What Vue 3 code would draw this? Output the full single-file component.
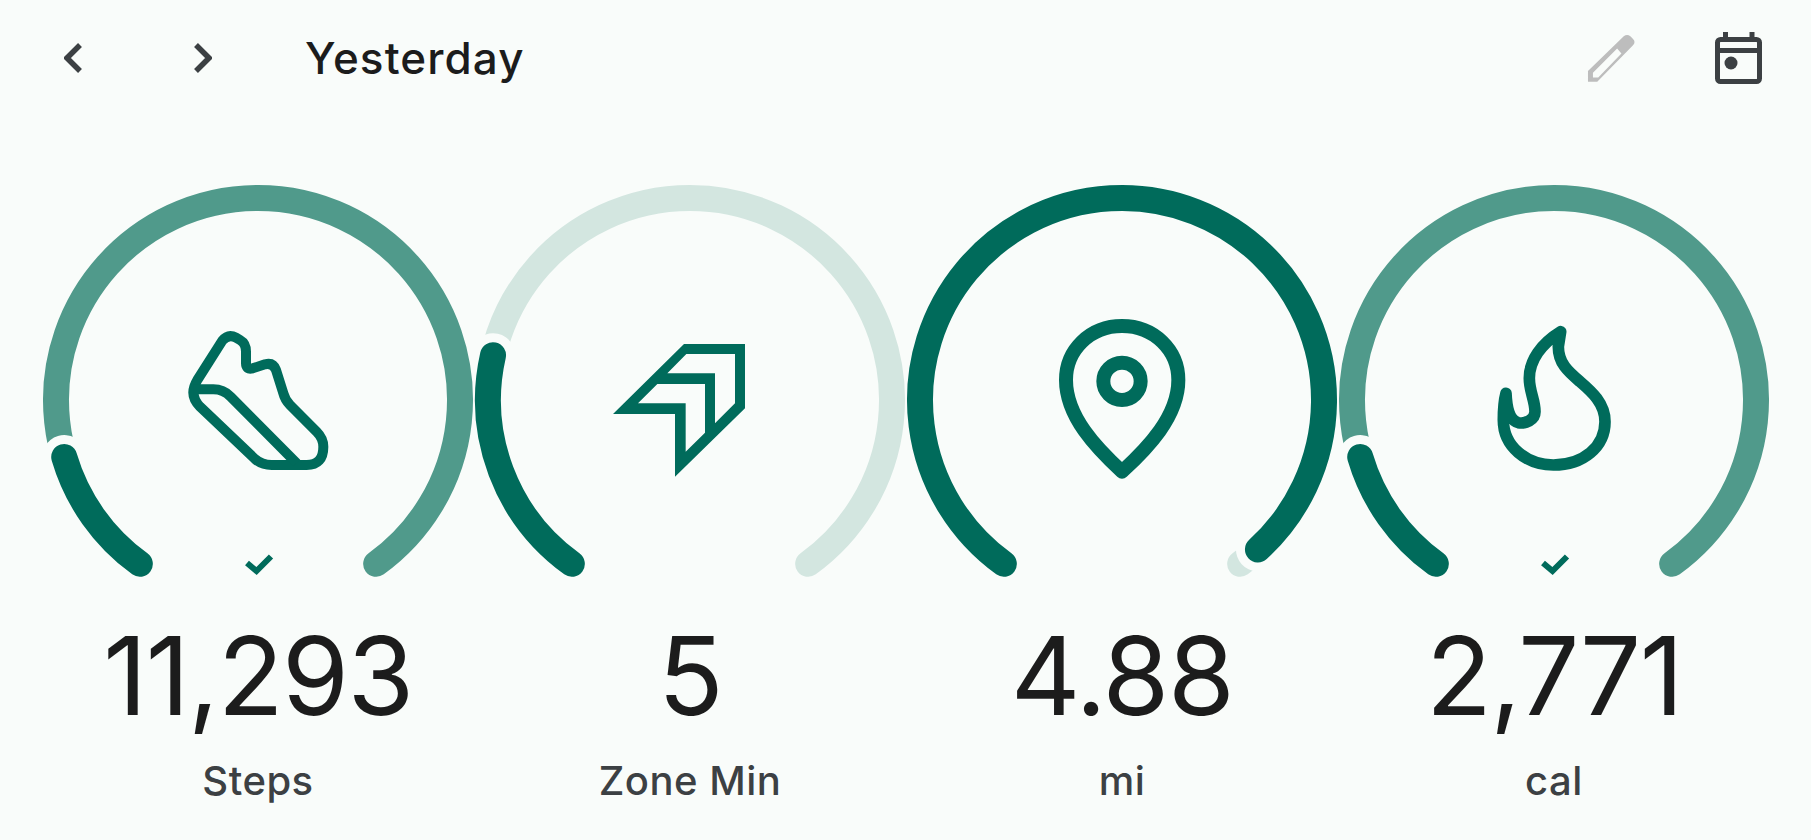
<script setup>
const CX = 216
const CY = 230
const R = 202
const START = 215.8
const END = 504.2

const point = (deg) => {
  const a = (deg * Math.PI) / 180
  return [CX + R * Math.sin(a), CY - R * Math.cos(a)]
}

const arc = (from, to) => {
  const [x1, y1] = point(from)
  const [x2, y2] = point(to)
  const large = to - from > 180 ? 1 : 0
  return `M${x1.toFixed(2)} ${y1.toFixed(2)}A${R} ${R} 0 ${large} 1 ${x2.toFixed(2)} ${y2.toFixed(2)}`
}

const gauges = [
  { label: 'Steps', value: '11,293', icon: 'shoe', track: '#509a8b', end: 253.6, done: true },
  { label: 'Zone Min', value: '5', icon: 'zone', track: '#d3e6e0', end: 282.8, done: false },
  { label: 'mi', value: '4.88', icon: 'pin', track: '#d3e6e0', end: 497.7, done: false },
  { label: 'cal', value: '2,771', icon: 'flame', track: '#509a8b', end: 253.6, done: true },
].map((g) => ({ ...g, trackPath: arc(START, END), progress: arc(START, g.end) }))
</script>

<template>
  <div class="page">
    <header class="top">
      <svg class="chevron" viewBox="0 0 20 32"><path d="M16 3 3 16l13 13" /></svg>
      <svg class="chevron next" viewBox="0 0 20 32"><path d="M4 3l13 13L4 29" /></svg>
      <h1 class="title">Yesterday</h1>
      <svg class="pencil" viewBox="250 95 170 160">
        <path fill-rule="evenodd" d="M267 245V213L375 108Q385 100 395 108L403 116Q412 125 403 135L295 245ZM282 218V232H298L368 160 355 145Z" />
      </svg>
      <svg class="calendar" viewBox="0 0 48 52">
        <rect x="2.5" y="7.5" width="42" height="42" rx="3" />
        <path d="M3 18.5h41M10.500 0v7M37 0v7" />
        <circle cx="16" cy="31" r="6.500" />
      </svg>
    </header>

    <section class="gauges">
      <div v-for="g in gauges" :key="g.label" class="gauge">
        <svg class="ring" viewBox="0 0 432 420">
          <path class="arc" :d="g.trackPath" :stroke="g.track" />
          <path class="arc halo" :d="g.progress" />
          <path class="arc" :d="g.progress" stroke="#006b5b" />

          <svg v-if="g.icon === 'shoe'" x="118" y="130" width="200" height="200" viewBox="0 0 600 600">
            <g class="line shoe">
              <path d="M187 122Q205 100 228 113L240 120Q258 130 258 155V190Q258 210 278 205L315 193Q340 187 348 210L370 280Q375 300 390 315L470 395Q490 415 490 440 490 495 440 495H335Q305 495 285 477L120 320Q85 285 112 240Z" />
              <path d="M100 268H160Q190 268 212 290L410 490" />
            </g>
          </svg>
          <svg v-else-if="g.icon === 'zone'" x="115" y="150" width="190" height="170" viewBox="0 0 570 510">
            <path class="solid" fill-rule="evenodd" d="M285 72H468V265L258 470V282H72ZM292 102H438V250L378 310V160H235ZM205 192H348V338L290 395V250H147Z" />
          </svg>
          <svg v-else-if="g.icon === 'pin'" x="124" y="130" width="180" height="190" viewBox="0 0 540 570">
            <g class="line pin">
              <path d="M276 515C200 445 108 350 108 240 108 150 180 78 276 78 372 78 445 150 445 240 445 350 352 445 276 515Z" />
              <circle cx="276" cy="244" r="56" />
            </g>
          </svg>
          <svg v-else x="132" y="140" width="170" height="170" viewBox="0 0 510 510">
            <path class="line flame" d="M272 65C215 100 178 150 178 205 178 245 195 270 195 305 195 330 165 342 145 338 120 332 110 295 108 250 100 280 100 310 100 330 100 410 170 465 250 465 340 465 405 410 405 335 405 280 365 245 330 215 295 185 265 160 265 110Z" />
          </svg>

          <path v-if="g.done" class="check" d="M205 393l9.500 8 14.500-14.500" />
        </svg>
        <div class="value">{{ g.value }}</div>
        <div class="label">{{ g.label }}</div>
      </div>
    </section>
  </div>
</template>

<style scoped>
.page {
  width: 1811px;
  height: 840px;
  overflow: hidden;
  background: #f9fcfa;
  font-family: Inter, "Noto Sans", sans-serif;
}

.top {
  height: 116px;
  display: flex;
  align-items: center;
  padding: 0 48px 0 64px;
}

.chevron {
  width: 20px;
  height: 32px;
  fill: none;
  stroke: #3c4043;
  stroke-width: 5.5;
}

.next {
  margin-left: 108px;
}

.title {
  margin: 0 0 0 93px;
  flex: 1;
  font-size: 44px;
  font-weight: 500;
  letter-spacing: 1.1px;
  color: #1c1c1c;
}

.pencil {
  width: 57px;
  height: 53px;
  margin-right: 76px;
  fill: #bdbdbd;
}

.calendar {
  width: 48px;
  height: 52px;
  fill: none;
  stroke: #3c4043;
  stroke-width: 5;
}

.calendar circle {
  fill: #3c4043;
  stroke: none;
}

.gauges {
  display: grid;
  grid-template-columns: repeat(4, 432px);
  padding: 54px 41px 0 42px;
}

.gauge {
  display: flex;
  flex-direction: column;
  align-items: center;
}

.ring {
  width: 432px;
  height: 420px;
  display: block;
}

.arc {
  fill: none;
  stroke-width: 26;
  stroke-linecap: round;
}

.halo {
  stroke: #f9fcfa;
  stroke-width: 44;
}

.line {
  fill: none;
  stroke: #006b5b;
  stroke-linejoin: round;
}

.shoe {
  stroke-width: 30;
}

.pin {
  stroke-width: 42;
}

.flame {
  stroke-width: 35;
}

.solid {
  fill: #006b5b;
}

.check {
  fill: none;
  stroke: #006b5b;
  stroke-width: 6;
}

.value {
  margin-top: 21px;
  font-size: 108px;
  line-height: 130px;
  letter-spacing: -1.5px;
  color: #1c1c1c;
}

.label {
  margin-top: 16px;
  font-size: 40px;
  font-weight: 500;
  line-height: 48px;
  letter-spacing: 0.5px;
  color: #3c4043;
}
</style>
